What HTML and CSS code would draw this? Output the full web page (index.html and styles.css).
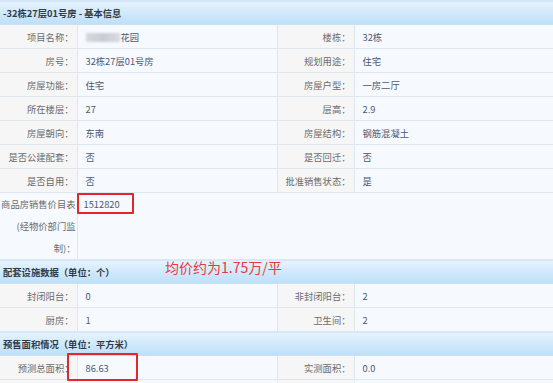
FILE: index.html
```html
<!DOCTYPE html>
<html lang="zh-CN">
<head>
<meta charset="utf-8">
<title>基本信息</title>
<link rel="stylesheet" href="styles.css">
</head>
<body>
<div class="page">
  <table class="info">
    <colgroup>
      <col class="c-label"><col class="c-value"><col class="c-label"><col class="c-value2">
    </colgroup>
    <tr class="sec"><th colspan="4">-32栋27层01号房 - 基本信息</th></tr>
    <tr><td class="lb">项目名称：</td><td class="val"><span class="blur"></span>花园</td><td class="lb">楼栋：</td><td class="val">32栋</td></tr>
    <tr><td class="lb">房号：</td><td class="val">32栋27层01号房</td><td class="lb">规划用途：</td><td class="val">住宅</td></tr>
    <tr><td class="lb">房屋功能：</td><td class="val">住宅</td><td class="lb">房屋户型：</td><td class="val">一房二厅</td></tr>
    <tr><td class="lb">所在楼层：</td><td class="val">27</td><td class="lb">层高：</td><td class="val">2.9</td></tr>
    <tr><td class="lb">房屋朝向：</td><td class="val">东南</td><td class="lb">房屋结构：</td><td class="val">钢筋混凝土</td></tr>
    <tr><td class="lb">是否公建配套：</td><td class="val">否</td><td class="lb">是否回迁：</td><td class="val">否</td></tr>
    <tr><td class="lb">是否自用：</td><td class="val">否</td><td class="lb">批准销售状态：</td><td class="val">是</td></tr>
    <tr class="tall"><td class="lb lb-wrap">商品房销售价目表(经物价部门监制)：</td><td class="val val-top" colspan="3">1512820</td></tr>
    <tr class="sec"><th colspan="4">配套设施数据（单位：个）</th></tr>
    <tr><td class="lb">封闭阳台：</td><td class="val">0</td><td class="lb">非封闭阳台：</td><td class="val">2</td></tr>
    <tr><td class="lb">厨房：</td><td class="val">1</td><td class="lb">卫生间：</td><td class="val">2</td></tr>
    <tr class="sec"><th colspan="4">预售面积情况（单位：平方米）</th></tr>
    <tr><td class="lb">预测总面积：</td><td class="val">86.63</td><td class="lb">实测面积：</td><td class="val">0.0</td></tr>
    <tr><td class="lb"></td><td class="val"></td><td class="lb"></td><td class="val"></td></tr>
  </table>
  <div class="mark mark-price"></div>
  <div class="mark mark-area"></div>
  <div class="note">均价约为1.75万/平</div>
</div>
</body>
</html>
```
FILE: styles.css
```css
html, body {
  margin: 0;
  padding: 0;
  background: #f6faff;
}
body {
  font-family: "Noto Sans CJK SC", "Noto Sans", sans-serif;
  font-size: 9.3px;
  overflow: hidden;
}
.page {
  position: relative;
  width: 553px;
  height: 383px;
  overflow: hidden;
}
.info {
  width: 553px;
  border-collapse: collapse;
  table-layout: fixed;
}
.c-label { width: 77px; }
.c-value { width: 200px; }
.c-value2 { width: 199px; }
.info tr { height: 24px; }
.info td {
  border: 1px solid #dde7f0;
  padding: 0;
  height: 23px;
  line-height: 14px;
  white-space: nowrap;
  overflow: hidden;
}
.info tr td:first-child { border-left: none; }
.lb {
  background: #f6f6f6;
  color: #6b6b6b;
  text-align: right;
  padding-right: 3px !important;
}
.val {
  background: #f6faff;
  color: #4b5874;
  padding-left: 8px !important;
}
.sec th {
  height: 23px;
  padding: 0 0 0 3px;
  text-align: left;
  font-weight: bold;
  color: #2f3a48;
  background: linear-gradient(#e6f3fd, #bcdff8);
  border-top: 1px solid #d4e7f6;
  border-bottom: 1px solid #c9e0f1;
}
.tall { height: 66px !important; }
.tall td { height: 65px; }
.lb-wrap {
  white-space: normal !important;
  text-align: right;
  line-height: 22px !important;
  word-break: break-all;
  padding-left: 0 !important;
  padding-right: 1px !important;
  vertical-align: top;
  background: #f6faff;
}
.val-top {
  vertical-align: top;
  line-height: 22px !important;
  padding-left: 6px !important;
  background: #f6faff;
}
.blur {
  display: inline-block;
  width: 34px;
  height: 9px;
  margin-right: 1px;
  vertical-align: -1px;
  background: linear-gradient(90deg, #d6d9df, #c9ccd3 50%, #d8dbe1);
  filter: blur(1px);
}
.mark {
  position: absolute;
  border: 2px solid #e2282a;
  border-radius: 1px;
  box-sizing: border-box;
}
.mark-price { left: 77px; top: 193px; width: 57px; height: 21px; }
.mark-area { left: 67px; top: 353px; width: 71px; height: 28px; }
.note {
  position: absolute;
  left: 165px;
  top: 257px;
  font-size: 14px;
  line-height: 20px;
  color: #e53b3d;
  white-space: nowrap;
}
```
